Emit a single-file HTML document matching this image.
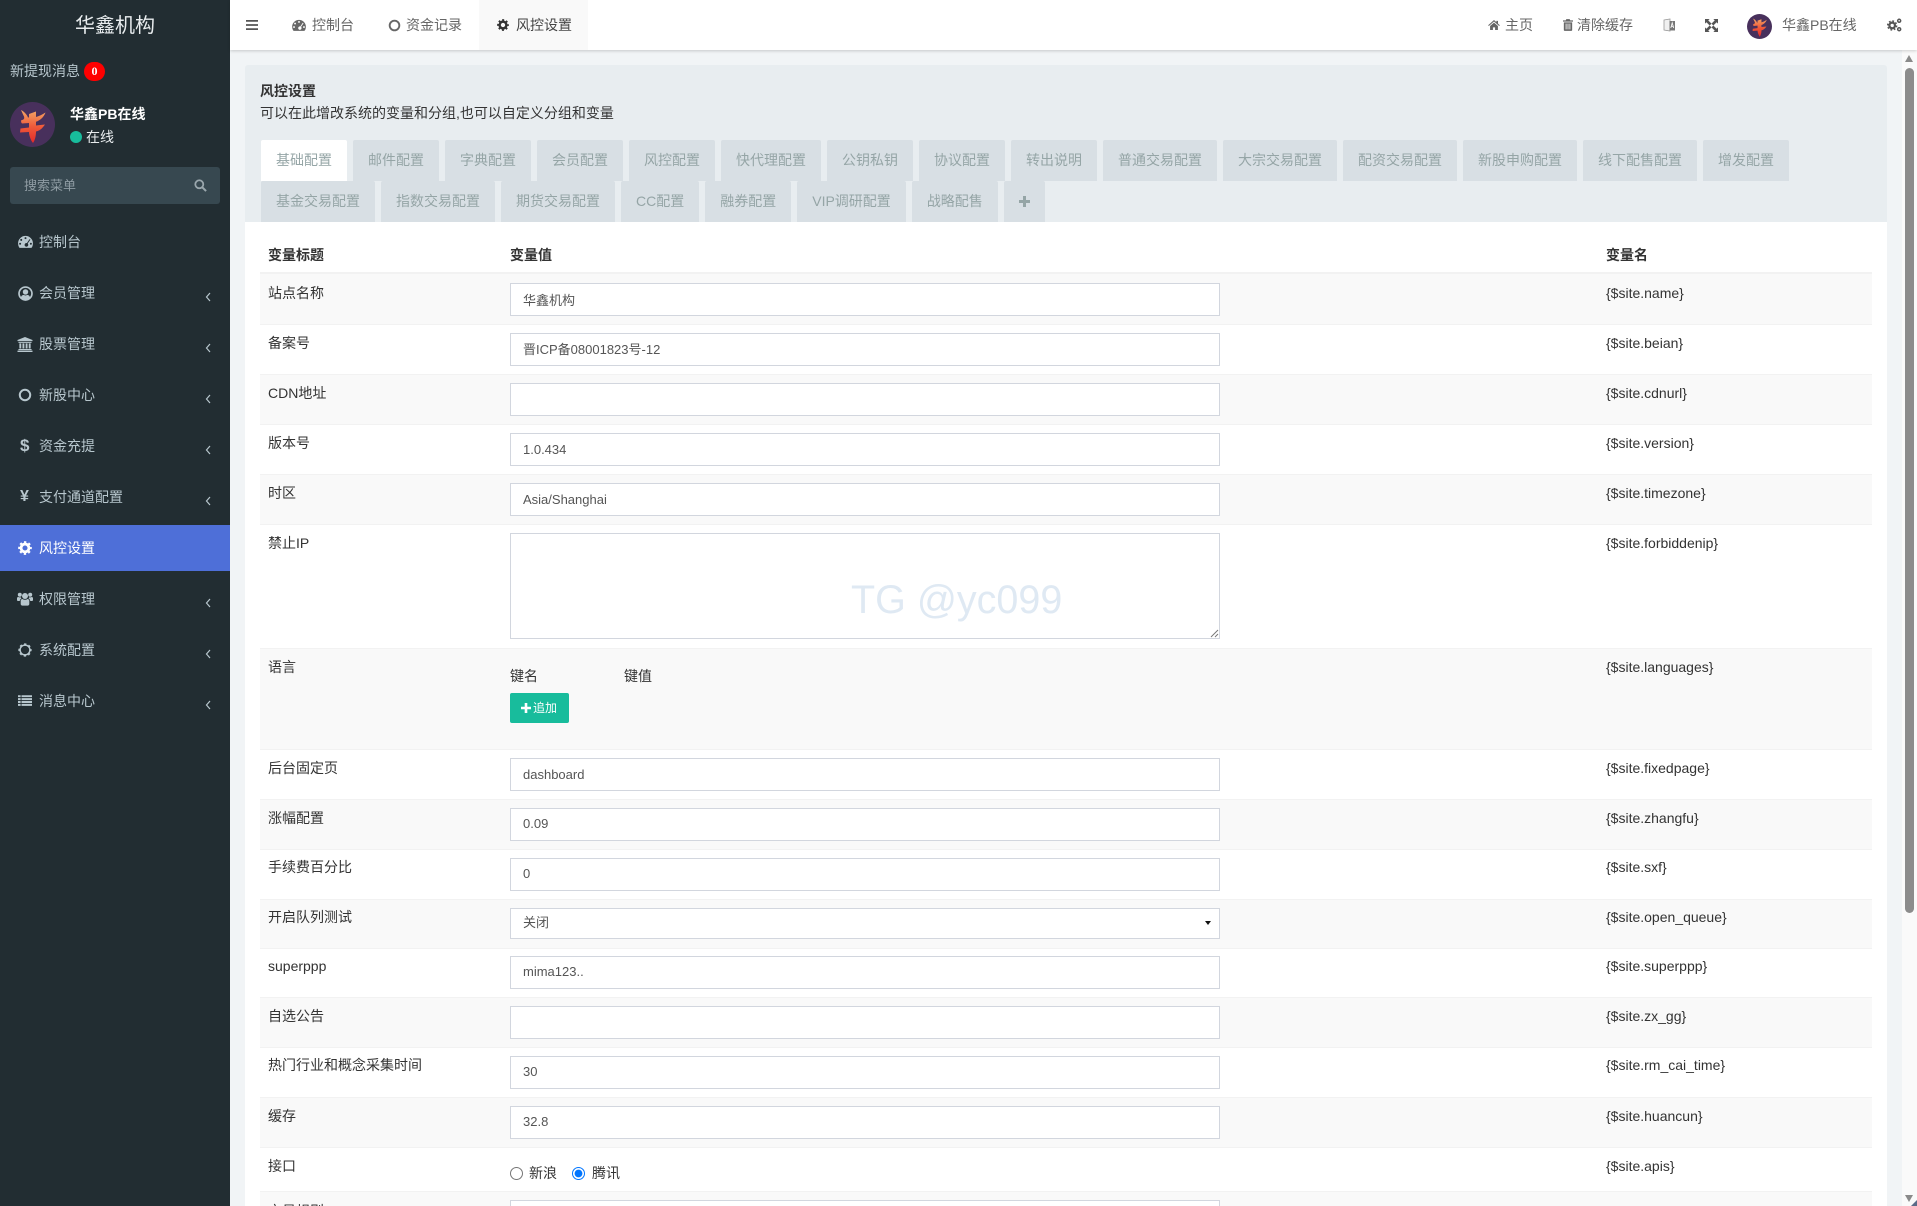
<!DOCTYPE html>
<html lang="zh-CN">
<head>
<meta charset="utf-8">
<title>风控设置</title>
<style>
*{box-sizing:border-box}
html,body{margin:0;padding:0;width:1917px;height:1206px;overflow:hidden;background:#f1f4f6;font:14px/20px "Liberation Sans","Noto Sans CJK SC",sans-serif;color:#333}
body{position:relative}
.a,.t{position:absolute}
.t{white-space:nowrap;line-height:20px}
svg.i{position:absolute;display:block;fill:currentColor}
#side{left:0;top:0;width:230px;height:1206px;background:#222d32}
#head{left:230px;top:0;width:1687px;height:50px;background:#fff;box-shadow:0 1px 3px rgba(0,0,0,.18)}
.m{color:#b8c7ce}
.h{color:#666}
#panelh{left:245px;top:65px;width:1642px;height:157px;background:#e8edf0;border-radius:3px 3px 0 0}
#panelb{left:245px;top:222px;width:1642px;height:984px;background:#fff}
#tabs{left:261px;top:140px;width:1600px;display:flex;flex-wrap:wrap;column-gap:6px}
#tabs div{height:41px;line-height:40px;padding:0 15px;background:#d8dfe4;color:#95a5a6;border-radius:2px 2px 0 0;white-space:nowrap}
#tabs div.on{background:#fff}
.r{position:absolute;left:260px;width:1612px;border-top:1px solid #f2f2f2}
.s{background:#f9f9f9}
.f{position:absolute;left:510px;width:710px;height:33px;border:1px solid #d2d6de;background:#fff;padding:0 12px;font-size:13px;line-height:31px;color:#555;white-space:nowrap}
.th{font-weight:bold;color:#333}
input[type=radio]{position:absolute;margin:0;width:13px;height:13px}
</style>
</head>
<body>
<svg width="0" height="0" style="position:absolute">
<symbol id="dash" viewBox="0 0 16 14"><path fill-rule="evenodd" d="M8 1a8 8 0 0 1 8 8c0 1.600-.4 3-1.100 4.300-.2.300-.5.500-.9.500H2c-.4 0-.7-.2-.9-.5A8.600 8.600 0 0 1 0 9a8 8 0 0 1 8-8zM8 2.300a1.100 1.100 0 1 0 0 2.200 1.100 1.100 0 0 0 0-2.200zM3.400 4.200a1.100 1.100 0 1 0 0 2.200 1.100 1.100 0 0 0 0-2.200zM2.200 8.300a1.100 1.100 0 1 0 0 2.200 1.100 1.100 0 0 0 0-2.200zM13.800 8.300a1.100 1.100 0 1 0 0 2.200 1.100 1.100 0 0 0 0-2.200zM12.400 4.400 9.500 8.700a2 2 0 1 0 .9.500L13.300 5z"/></symbol>
<symbol id="gear" viewBox="0 0 16 16"><circle cx="8" cy="8" r="4.500" fill="none" stroke="currentColor" stroke-width="3.200"/><circle cx="8" cy="8" r="6.600" fill="none" stroke="currentColor" stroke-width="2.400" stroke-dasharray="2.590 2.590" stroke-dashoffset="1.300"/></symbol>
<symbol id="gearo" viewBox="0 0 16 16"><circle cx="8" cy="8" r="5.600" fill="none" stroke="currentColor" stroke-width="1.700"/><circle cx="8" cy="8" r="6.800" fill="none" stroke="currentColor" stroke-width="1.600" stroke-dasharray="2.670 2.670" stroke-dashoffset="1.300"/></symbol>
<symbol id="ring" viewBox="0 0 14 14"><circle cx="7" cy="7" r="5.200" fill="none" stroke="currentColor" stroke-width="2"/></symbol>
<symbol id="user" viewBox="0 0 16 16"><circle cx="8" cy="8" r="6.900" fill="none" stroke="currentColor" stroke-width="1.800"/><circle cx="8" cy="6.300" r="2.900"/><path d="M3 12.500C3.500 10.300 5 9.600 6 9.500c1.200.8 2.800.8 4 0 1 .1 2.500.8 3 3-2.500 2.900-7.500 2.900-10 0z"/></symbol>
<symbol id="bank" viewBox="0 0 16 16"><path d="M8 0 16 3.200V4.400H0V3.200zM1 5.200h14v1H1zM2 6.800h2v5.400H2zM5.300 6.800h2v5.400h-2zM8.700 6.800h2v5.400h-2zM12 6.800h2v5.400h-2zM1 12.800h14v1.200H1zM0 14.500h16V16H0z"/></symbol>
<symbol id="users" viewBox="0 0 16 14"><circle cx="8" cy="4" r="3"/><circle cx="2.800" cy="2.800" r="2"/><circle cx="13.200" cy="2.800" r="2"/><path d="M3.700 8.600C3.700 7.400 5 7 5.500 7c1.500 1 3.500 1 5 0 .5 0 1.800.4 1.800 1.600V12c0 1-.8 1.600-1.600 1.600H5.300c-.8 0-1.600-.6-1.600-1.600z"/><path d="M0 6.200C0 5.400.8 5 1.300 5c.9.500 1.900.500 2.600.2 0 .5.300 1 .6 1.300C3.400 6.900 2.800 7.800 2.800 9H1C.4 9 0 8.600 0 8zM16 6.200C16 5.400 15.200 5 14.700 5c-.9.500-1.900.500-2.600.2 0 .5-.3 1-.6 1.300 1.100.4 1.700 1.300 1.700 2.500H15c.6 0 1-.4 1-1z"/></symbol>
<symbol id="list" viewBox="0 0 16 14"><path d="M0 1h3v2.200H0zM4 1h12v2.200H4zM0 4.300h3v2.200H0zM4 4.300h12v2.200H4zM0 7.600h3v2.200H0zM4 7.600h12v2.200H4zM0 10.900h3v2.200H0zM4 10.900h12v2.200H4z"/></symbol>
<symbol id="chev" viewBox="0 0 8 12"><path d="M6 2 2.500 6 6 10" fill="none" stroke="currentColor" stroke-width="1.200"/></symbol>
<symbol id="search" viewBox="0 0 14 14"><circle cx="5.700" cy="5.700" r="4.300" fill="none" stroke="currentColor" stroke-width="1.900"/><path d="M8.800 8.800 13 13" stroke="currentColor" stroke-width="2.200" fill="none"/></symbol>
<symbol id="home" viewBox="0 0 14 12"><path d="M7 0 9.800 2.500V1h2v3.300L14 6.300l-.8.900L7 1.800.8 7.200 0 6.300zM2.300 7.200 7 3.200l4.700 4V12H8.300V8.800H5.700V12H2.300z"/></symbol>
<symbol id="trash" viewBox="0 0 12 14"><path fill-rule="evenodd" d="M4 0h4l.7 1.500H12V3H0V1.500h3.300zM1 3.800h10V13c0 .6-.4 1-1 1H2c-.6 0-1-.4-1-1zM3.200 5.300v7h1v-7zM5.500 5.300v7h1v-7zM7.800 5.300v7h1v-7z"/></symbol>
<symbol id="expand" viewBox="0 0 14 14"><path d="M0 0h5L3.500 1.500 7 5 5 7 1.500 3.500 0 5zM14 0v5L12.500 3.500 9 7 7 5 10.500 1.500 9 0zM0 14V9l1.500 1.500L5 7l2 2-3.500 3.500L5 14zM14 14H9l1.500-1.500L7 9l2-2 3.500 3.500L14 9z"/></symbol>
<symbol id="cogs" viewBox="0 0 16 15"><circle cx="5.500" cy="8" r="3" fill="none" stroke="currentColor" stroke-width="2.400"/><circle cx="5.500" cy="8" r="4.800" fill="none" stroke="currentColor" stroke-width="1.600" stroke-dasharray="1.880 1.890"/><circle cx="13" cy="3" r="1.600" fill="none" stroke="currentColor" stroke-width="1.600"/><circle cx="13" cy="12" r="1.600" fill="none" stroke="currentColor" stroke-width="1.600"/></symbol>
<linearGradient id="gr" x1="0" y1="0" x2="0" y2="1"><stop offset="0" stop-color="#f4a765"/><stop offset=".5" stop-color="#ef5a3a"/><stop offset="1" stop-color="#e22a2a"/></linearGradient>
<symbol id="ava" viewBox="0 0 45 45"><circle cx="22.500" cy="22.500" r="22.500" fill="#48305c"/><path fill="url(#gr)" d="M11 8C14 9.500 17 12.500 18 15.500L19 15.400 19 12 26 9.500 26 15C29.500 14 32.500 12.500 35.500 10.500 34 15 30 18.500 26 19.800L26 23.500 35 22.500C32 27 29 29 26 29.500 26 34 25 38 23 41 20.500 38 19 33 19 30L10 30.500 10.500 26.500 19 25.500 19 21 12 21.500C11 20.500 10.800 19 11.500 18 14 18 15 16 13.500 13.500z"/></symbol>
</svg>

<!-- Sidebar -->
<div id="side" class="a">
  <div class="t" style="left:0;width:230px;text-align:center;top:14px;font-size:20px;line-height:24px;color:#e8ecee">华鑫机构</div>
  <div class="t m" style="left:10px;top:61px">新提现消息</div>
  <div class="a" style="left:84px;top:62px;width:21px;height:19px;border-radius:10px;background:#f00;color:#fff;font:bold 12px/19px 'Liberation Serif',serif;text-align:center">0</div>
  <svg class="i" style="left:10px;top:102px" width="45" height="45"><use href="#ava"/></svg>
  <div class="t" style="left:70px;top:104px;font-weight:bold;color:#fff">华鑫PB在线</div>
  <div class="a" style="left:70px;top:131px;width:12px;height:12px;border-radius:50%;background:#18bc9c"></div>
  <div class="t" style="left:86px;top:127px;color:#e8ecee">在线</div>
  <div class="a" style="left:10px;top:167px;width:210px;height:37px;border-radius:3px;background:#374850"></div>
  <div class="t" style="left:24px;top:176px;font-size:13px;color:#8f9ca3">搜索菜单</div>
  <svg class="i" style="left:194px;top:179px;color:#9aa7ad" width="13" height="13"><use href="#search"/></svg>

  <div class="a" style="left:0;top:525px;width:230px;height:46px;background:#4e6fd8"></div>

  <svg class="i m" style="left:18px;top:235px" width="15" height="13"><use href="#dash"/></svg>
  <div class="t m" style="left:39px;top:232px">控制台</div>

  <svg class="i m" style="left:18px;top:286px" width="15" height="15"><use href="#user"/></svg>
  <div class="t m" style="left:39px;top:283px">会员管理</div>
  <svg class="i m" style="left:204px;top:291px" width="8" height="12"><use href="#chev"/></svg>

  <svg class="i m" style="left:17px;top:337px" width="16" height="15"><use href="#bank"/></svg>
  <div class="t m" style="left:39px;top:334px">股票管理</div>
  <svg class="i m" style="left:204px;top:342px" width="8" height="12"><use href="#chev"/></svg>

  <svg class="i m" style="left:18px;top:388px" width="14" height="14"><use href="#ring"/></svg>
  <div class="t m" style="left:39px;top:385px">新股中心</div>
  <svg class="i m" style="left:204px;top:393px" width="8" height="12"><use href="#chev"/></svg>

  <div class="t m" style="left:20px;top:436px;font-weight:bold;font-size:17px">$</div>
  <div class="t m" style="left:39px;top:436px">资金充提</div>
  <svg class="i m" style="left:204px;top:444px" width="8" height="12"><use href="#chev"/></svg>

  <div class="t m" style="left:20px;top:487px;font-weight:bold;font-size:16px">¥</div>
  <div class="t m" style="left:39px;top:487px">支付通道配置</div>
  <svg class="i m" style="left:204px;top:495px" width="8" height="12"><use href="#chev"/></svg>

  <svg class="i" style="left:18px;top:541px;color:#fff" width="14" height="14"><use href="#gear"/></svg>
  <div class="t" style="left:39px;top:538px;color:#fff">风控设置</div>

  <svg class="i m" style="left:17px;top:592px" width="16" height="14"><use href="#users"/></svg>
  <div class="t m" style="left:39px;top:589px">权限管理</div>
  <svg class="i m" style="left:204px;top:597px" width="8" height="12"><use href="#chev"/></svg>

  <svg class="i m" style="left:18px;top:643px" width="14" height="14"><use href="#gearo"/></svg>
  <div class="t m" style="left:39px;top:640px">系统配置</div>
  <svg class="i m" style="left:204px;top:648px" width="8" height="12"><use href="#chev"/></svg>

  <svg class="i m" style="left:18px;top:694px" width="14" height="13"><use href="#list"/></svg>
  <div class="t m" style="left:39px;top:691px">消息中心</div>
  <svg class="i m" style="left:204px;top:699px" width="8" height="12"><use href="#chev"/></svg>
</div>

<!-- Content panel -->
<div id="panelh" class="a"></div>
<div id="panelb" class="a"></div>
<div class="t" style="left:260px;top:81px;font-weight:bold;color:#333">风控设置</div>
<div class="t" style="left:260px;top:103px;color:#333">可以在此增改系统的变量和分组,也可以自定义分组和变量</div>
<div id="tabs" class="a">
  <div class="on">基础配置</div><div>邮件配置</div><div>字典配置</div><div>会员配置</div><div>风控配置</div><div>快代理配置</div><div>公钥私钥</div><div>协议配置</div><div>转出说明</div><div>普通交易配置</div><div>大宗交易配置</div><div>配资交易配置</div><div>新股申购配置</div><div>线下配售配置</div><div>增发配置</div>
  <div style="flex-basis:100%;height:0;padding:0;background:none"></div>
  <div>基金交易配置</div><div>指数交易配置</div><div>期货交易配置</div><div>CC配置</div><div>融券配置</div><div>VIP调研配置</div><div>战略配售</div><div style="width:41px;padding:0"></div>
</div>
<svg class="i" style="left:1019px;top:196px;color:#95a5a6" width="11" height="11" viewBox="0 0 11 11"><path d="M4 0h3v4h4v3H7v4H4V7H0V4h4z"/></svg>

<!-- Table -->
<div class="t th" style="left:268px;top:245px">变量标题</div>
<div class="t th" style="left:510px;top:245px">变量值</div>
<div class="t th" style="left:1606px;top:245px">变量名</div>
<div class="a" style="left:260px;top:272px;width:1612px;height:1px;background:#f2f2f2"></div>

<div class="r s" style="top:273px;height:51px"></div>
<div class="r" style="top:324px;height:50px"></div>
<div class="r s" style="top:374px;height:50px"></div>
<div class="r" style="top:424px;height:50px"></div>
<div class="r s" style="top:474px;height:50px"></div>
<div class="r" style="top:524px;height:124px"></div>
<div class="r s" style="top:648px;height:101px"></div>
<div class="r" style="top:749px;height:50px"></div>
<div class="r s" style="top:799px;height:50px"></div>
<div class="r" style="top:849px;height:50px"></div>
<div class="r s" style="top:899px;height:49px"></div>
<div class="r" style="top:948px;height:49px"></div>
<div class="r s" style="top:997px;height:50px"></div>
<div class="r" style="top:1047px;height:50px"></div>
<div class="r s" style="top:1097px;height:50px"></div>
<div class="r" style="top:1147px;height:44px"></div>
<div class="r s" style="top:1191px;height:15px"></div>

<div class="t" style="left:268px;top:283px">站点名称</div>
<div class="t" style="left:268px;top:333px">备案号</div>
<div class="t" style="left:268px;top:383px">CDN地址</div>
<div class="t" style="left:268px;top:433px">版本号</div>
<div class="t" style="left:268px;top:483px">时区</div>
<div class="t" style="left:268px;top:533px">禁止IP</div>
<div class="t" style="left:268px;top:657px">语言</div>
<div class="t" style="left:268px;top:758px">后台固定页</div>
<div class="t" style="left:268px;top:808px">涨幅配置</div>
<div class="t" style="left:268px;top:857px">手续费百分比</div>
<div class="t" style="left:268px;top:907px">开启队列测试</div>
<div class="t" style="left:268px;top:956px">superppp</div>
<div class="t" style="left:268px;top:1006px">自选公告</div>
<div class="t" style="left:268px;top:1055px">热门行业和概念采集时间</div>
<div class="t" style="left:268px;top:1106px">缓存</div>
<div class="t" style="left:268px;top:1156px">接口</div>
<div class="t" style="left:268px;top:1201px">交易规则</div>

<div class="f" style="top:283px;line-height:33px">华鑫机构</div>
<div class="f" style="top:333px">晋ICP备08001823号-12</div>
<div class="f" style="top:383px"></div>
<div class="f" style="top:433px">1.0.434</div>
<div class="f" style="top:483px">Asia/Shanghai</div>
<div class="f" style="top:533px;height:106px"></div>
<div class="t" style="left:851px;top:577px;font-size:39.500px;line-height:46px;color:#dfe9f3">TG @yc099</div>
<svg class="i" style="left:1209px;top:628px;color:#777" width="10" height="10" viewBox="0 0 10 10"><path d="M9 2 2 9M9 6 6 9" stroke="currentColor" fill="none"/></svg>

<div class="t" style="left:510px;top:666px;color:#333">键名</div>
<div class="t" style="left:624px;top:666px;color:#333">键值</div>
<div class="a" style="left:510px;top:693px;width:59px;height:30px;background:#18bc9c;border-radius:2px"></div>
<svg class="i" style="left:521px;top:703px;color:#fff" width="10" height="10" viewBox="0 0 10 10"><path d="M3.700 0h2.600v3.700H10v2.600H6.300V10H3.700V6.300H0V3.700h3.700z"/></svg>
<div class="t" style="left:533px;top:698px;color:#fff;font-size:12px">追加</div>

<div class="f" style="top:758px">dashboard</div>
<div class="f" style="top:808px;line-height:29px">0.09</div>
<div class="f" style="top:858px;line-height:29px">0</div>
<div class="f" style="top:908px;height:31px;line-height:27px">关闭</div>
<div class="a" style="left:1205px;top:921px;width:0;height:0;border-left:3.500px solid transparent;border-right:3.500px solid transparent;border-top:4px solid #111"></div>
<div class="f" style="top:956px;line-height:30px">mima123..</div>
<div class="f" style="top:1006px"></div>
<div class="f" style="top:1056px;line-height:29px">30</div>
<div class="f" style="top:1106px;line-height:29px">32.8</div>
<input type="radio" name="api" style="left:510px;top:1167px">
<div class="t" style="left:529px;top:1163px;color:#333">新浪</div>
<input type="radio" name="api" checked style="left:572px;top:1167px">
<div class="t" style="left:592px;top:1163px;color:#333">腾讯</div>
<div class="f" style="top:1200px"></div>

<div class="t" style="left:1606px;top:283px">{$site.name}</div>
<div class="t" style="left:1606px;top:333px">{$site.beian}</div>
<div class="t" style="left:1606px;top:383px">{$site.cdnurl}</div>
<div class="t" style="left:1606px;top:433px">{$site.version}</div>
<div class="t" style="left:1606px;top:483px">{$site.timezone}</div>
<div class="t" style="left:1606px;top:533px">{$site.forbiddenip}</div>
<div class="t" style="left:1606px;top:657px">{$site.languages}</div>
<div class="t" style="left:1606px;top:758px">{$site.fixedpage}</div>
<div class="t" style="left:1606px;top:808px">{$site.zhangfu}</div>
<div class="t" style="left:1606px;top:857px">{$site.sxf}</div>
<div class="t" style="left:1606px;top:907px">{$site.open_queue}</div>
<div class="t" style="left:1606px;top:956px">{$site.superppp}</div>
<div class="t" style="left:1606px;top:1006px">{$site.zx_gg}</div>
<div class="t" style="left:1606px;top:1055px">{$site.rm_cai_time}</div>
<div class="t" style="left:1606px;top:1106px">{$site.huancun}</div>
<div class="t" style="left:1606px;top:1156px">{$site.apis}</div>
<div class="t" style="left:1606px;top:1201px">{$site.kfurl}</div>

<!-- Scrollbar -->
<div class="a" style="left:1902px;top:50px;width:15px;height:1156px;background:#fafafa"></div>
<div class="a" style="left:1905px;top:55px;width:0;height:0;border-left:4.500px solid transparent;border-right:4.500px solid transparent;border-bottom:7px solid #8a8a8a"></div>
<div class="a" style="left:1905px;top:68px;width:9px;height:845px;border-radius:4.500px;background:#8c8c8c"></div>
<div class="a" style="left:1905px;top:1195px;width:0;height:0;border-left:4.500px solid transparent;border-right:4.500px solid transparent;border-top:7px solid #8a8a8a"></div>
<div class="a" style="left:1911px;top:1200px;width:0;height:0;border-left:6px solid transparent;border-bottom:6px solid #5b6b88"></div>

<!-- Header -->
<div id="head" class="a"></div>
<div class="a" style="left:479px;top:0;width:109px;height:50px;background:#f9f9f9"></div>
<svg class="i" style="left:246px;top:20px;color:#555" width="12" height="10" viewBox="0 0 12 10"><path d="M0 0h12v1.800H0zM0 4.100h12v1.800H0zM0 8.200h12V10H0z"/></svg>
<svg class="i h" style="left:292px;top:19px" width="14" height="12"><use href="#dash"/></svg>
<div class="t h" style="left:312px;top:15px">控制台</div>
<svg class="i h" style="left:388px;top:19px" width="13" height="13"><use href="#ring"/></svg>
<div class="t h" style="left:406px;top:15px">资金记录</div>
<svg class="i" style="left:497px;top:19px;color:#333" width="12" height="12"><use href="#gear"/></svg>
<div class="t" style="left:516px;top:15px;color:#444">风控设置</div>

<svg class="i h" style="left:1488px;top:20px" width="12" height="10"><use href="#home"/></svg>
<div class="t h" style="left:1505px;top:15px">主页</div>
<svg class="i h" style="left:1563px;top:19px" width="10" height="12"><use href="#trash"/></svg>
<div class="t h" style="left:1577px;top:15px">清除缓存</div>
<svg class="i h" style="left:1663px;top:18px" width="13" height="14" viewBox="0 0 13 14"><path d="M1 2 7 1v12L1 12z" fill="#f0f0f0" stroke="#999" stroke-width=".8"/><path d="M6.500 3h5.500v9.500H6.500z" fill="#777"/><path d="M7.800 10 9.200 4.800 10.700 10M8.400 8.300h1.700" stroke="#fff" fill="none" stroke-width=".8"/></svg>
<svg class="i" style="left:1705px;top:19px;color:#555" width="13" height="13"><use href="#expand"/></svg>
<svg class="i" style="left:1747px;top:14px" width="25" height="25"><use href="#ava"/></svg>
<div class="t h" style="left:1782px;top:15px">华鑫PB在线</div>
<svg class="i" style="left:1887px;top:18px;color:#555" width="15" height="14"><use href="#cogs"/></svg>
</body>
</html>
